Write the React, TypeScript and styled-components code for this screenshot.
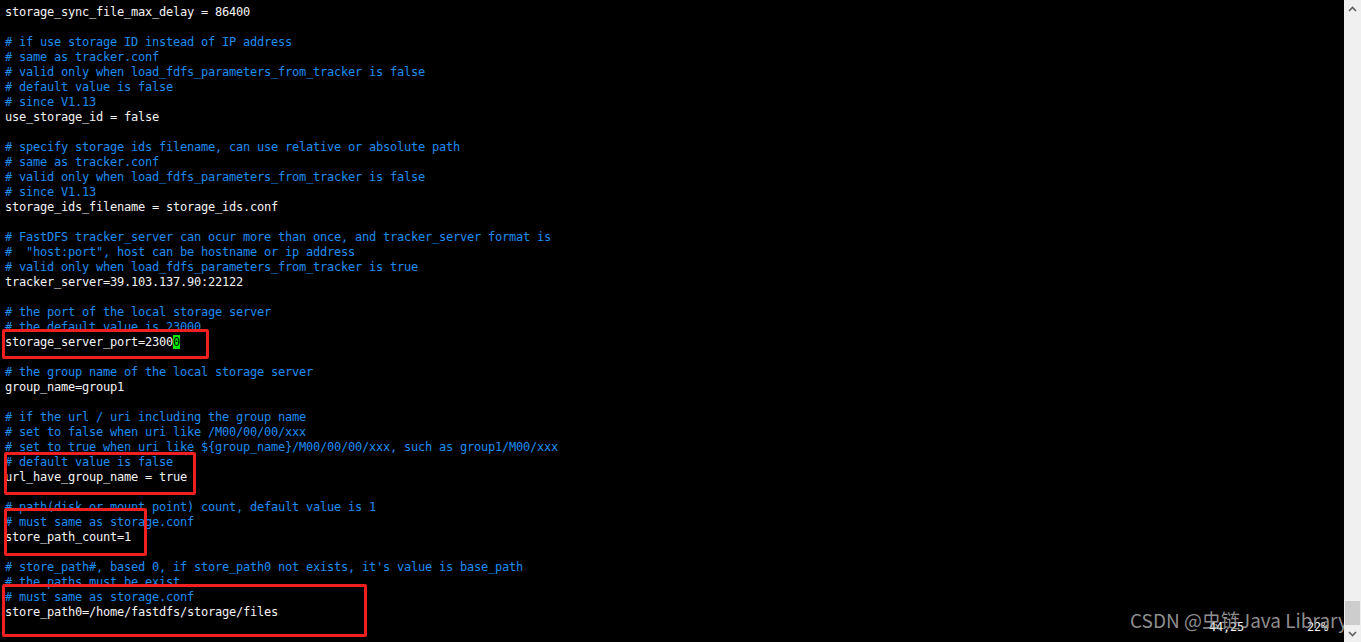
import React from "react";
import styled, { createGlobalStyle } from "styled-components";

const GlobalStyle = createGlobalStyle`
  html, body { margin: 0; padding: 0; background: #000; }
  body { width: 1361px; height: 642px; overflow: hidden; }
`;

type Line = { text: string; kind: "code" | "comment" | "blank"; cursorAt?: number };

const raw: string[] = [
  "storage_sync_file_max_delay = 86400",
  "",
  "# if use storage ID instead of IP address",
  "# same as tracker.conf",
  "# valid only when load_fdfs_parameters_from_tracker is false",
  "# default value is false",
  "# since V1.13",
  "use_storage_id = false",
  "",
  "# specify storage ids filename, can use relative or absolute path",
  "# same as tracker.conf",
  "# valid only when load_fdfs_parameters_from_tracker is false",
  "# since V1.13",
  "storage_ids_filename = storage_ids.conf",
  "",
  "# FastDFS tracker_server can ocur more than once, and tracker_server format is",
  "#  \"host:port\", host can be hostname or ip address",
  "# valid only when load_fdfs_parameters_from_tracker is true",
  "tracker_server=39.103.137.90:22122",
  "",
  "# the port of the local storage server",
  "# the default value is 23000",
  "storage_server_port=23000",
  "",
  "# the group name of the local storage server",
  "group_name=group1",
  "",
  "# if the url / uri including the group name",
  "# set to false when uri like /M00/00/00/xxx",
  "# set to true when uri like ${group_name}/M00/00/00/xxx, such as group1/M00/xxx",
  "# default value is false",
  "url_have_group_name = true",
  "",
  "# path(disk or mount point) count, default value is 1",
  "# must same as storage.conf",
  "store_path_count=1",
  "",
  "# store_path#, based 0, if store_path0 not exists, it's value is base_path",
  "# the paths must be exist",
  "# must same as storage.conf",
  "store_path0=/home/fastdfs/storage/files",
];

const lines: Line[] = raw.map((t) => ({
  text: t,
  kind: t === "" ? "blank" : t.startsWith("#") ? "comment" : "code",
  cursorAt: t === "storage_server_port=23000" ? 24 : undefined,
}));

const rulerText = " ".repeat(172) + "44,25" + " ".repeat(9) + "22%";

const Screen = styled.div`
  display: flex;
  width: 1361px;
  height: 642px;
  background: #000;
`;

const Terminal = styled.div`
  position: relative;
  flex: 1;
  overflow: hidden;
  padding: 5px 0 0 5px;
  background: #000;
  font-family: "DejaVu Sans Mono", "Liberation Mono", monospace;
  font-size: 12px;
  letter-spacing: -0.224px;
  line-height: 15px;
`;

const Row = styled.div<{ $kind: "code" | "comment" | "blank" | "ruler" }>`
  height: 15px;
  white-space: pre;
  color: ${(p) => (p.$kind === "comment" ? "#1e8cf0" : "#f4f4f4")};
`;

const Cursor = styled.span`
  background: #00e600;
  color: #000;
`;

const Highlight = styled.div<{ $x: number; $y: number; $w: number; $h: number }>`
  position: absolute;
  left: ${(p) => p.$x}px;
  top: ${(p) => p.$y}px;
  width: ${(p) => p.$w}px;
  height: ${(p) => p.$h}px;
  box-sizing: border-box;
  border: 3px solid #f02020;
  border-radius: 2px;
  pointer-events: none;
`;

const Watermark = styled.div`
  position: absolute;
  left: 1130px;
  top: 605px;
  white-space: nowrap;
  font-family: "Noto Sans CJK SC", "Noto Sans", sans-serif;
  font-size: 19px;
  line-height: 30px;
  letter-spacing: 0;
  color: rgba(170, 170, 170, 0.85);
`;

const Scrollbar = styled.div`
  width: 17px;
  display: flex;
  flex-direction: column;
  background: #f0f0f0;
`;

const ArrowButton = styled.div`
  height: 17px;
  display: flex;
  align-items: center;
  justify-content: center;
`;

const Track = styled.div`
  flex: 1;
  display: flex;
  flex-direction: column;
  justify-content: flex-end;
  padding: 0 1px;
`;

const Thumb = styled.div`
  height: 24px;
  background: #cdcdcd;
`;

const Chevron = ({ up }: { up?: boolean }) => (
  <svg width="9" height="6" viewBox="0 0 9 6">
    <path
      d={up ? "M1 5 L4.5 1.5 L8 5" : "M1 1 L4.5 4.5 L8 1"}
      fill="none"
      stroke="#606060"
      strokeWidth="1.6"
    />
  </svg>
);

export default function App() {
  return (
    <>
      <GlobalStyle />
      <Screen>
        <Terminal>
          {lines.map((l, i) => (
            <Row key={i} $kind={l.kind}>
              {l.cursorAt !== undefined ? (
                <>
                  {l.text.slice(0, l.cursorAt)}
                  <Cursor>{l.text.slice(l.cursorAt, l.cursorAt + 1)}</Cursor>
                  {l.text.slice(l.cursorAt + 1)}
                </>
              ) : (
                l.text || " "
              )}
            </Row>
          ))}
          <Row $kind="ruler">{rulerText}</Row>
          <Highlight $x={2} $y={329} $w={207} $h={30} />
          <Highlight $x={4} $y={452} $w={192} $h={43} />
          <Highlight $x={4} $y={508} $w={143} $h={48} />
          <Highlight $x={2} $y={584} $w={365} $h={53} />
          <Watermark>CSDN @虫链Java Library</Watermark>
        </Terminal>
        <Scrollbar>
          <ArrowButton>
            <Chevron up />
          </ArrowButton>
          <Track>
            <Thumb />
          </Track>
          <ArrowButton>
            <Chevron />
          </ArrowButton>
        </Scrollbar>
      </Screen>
    </>
  );
}
